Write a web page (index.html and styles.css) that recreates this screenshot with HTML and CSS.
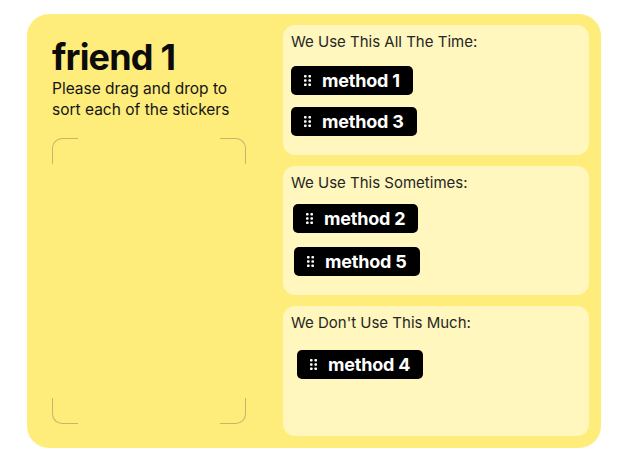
FILE: index.html
```html
<!DOCTYPE html>
<html lang="en">
<head>
  <meta charset="UTF-8">
  <meta name="viewport" content="width=device-width, initial-scale=1.0">
  <title>Sticker Sort</title>
  <link rel="stylesheet" href="styles.css">
</head>
<body>
  <!-- Sticker board -->
  <main class="board">
    <section class="intro">
      <h1 class="friend-name">friend 1</h1>
      <p class="hint">Please drag and drop to sort each of the stickers</p>

      <!-- Empty tray, only the corners are drawn -->
      <div class="tray">
        <div class="tray-row">
          <span class="corner corner-tl"></span>
          <span class="corner corner-tr"></span>
        </div>
        <div class="tray-row">
          <span class="corner corner-bl"></span>
          <span class="corner corner-br"></span>
        </div>
      </div>
    </section>

    <section class="buckets">
      <div class="bucket">
        <p class="bucket-title">We Use This All The Time:</p>
        <div class="sticker sticker-1">
          <svg class="grip" width="7" height="11" viewBox="0 0 7 11"><rect x="0" y="0" width="2.6" height="2.6" rx="0.8"/><rect x="4.4" y="0" width="2.6" height="2.6" rx="0.8"/><rect x="0" y="4.2" width="2.6" height="2.6" rx="0.8"/><rect x="4.4" y="4.2" width="2.6" height="2.6" rx="0.8"/><rect x="0" y="8.4" width="2.6" height="2.6" rx="0.8"/><rect x="4.4" y="8.4" width="2.6" height="2.6" rx="0.8"/></svg>
          <span>method 1</span>
        </div>
        <div class="sticker sticker-3">
          <svg class="grip" width="7" height="11" viewBox="0 0 7 11"><rect x="0" y="0" width="2.6" height="2.6" rx="0.8"/><rect x="4.4" y="0" width="2.6" height="2.6" rx="0.8"/><rect x="0" y="4.2" width="2.6" height="2.6" rx="0.8"/><rect x="4.4" y="4.2" width="2.6" height="2.6" rx="0.8"/><rect x="0" y="8.4" width="2.6" height="2.6" rx="0.8"/><rect x="4.4" y="8.4" width="2.6" height="2.6" rx="0.8"/></svg>
          <span>method 3</span>
        </div>
      </div>

      <div class="bucket">
        <p class="bucket-title">We Use This Sometimes:</p>
        <div class="sticker sticker-2">
          <svg class="grip" width="7" height="11" viewBox="0 0 7 11"><rect x="0" y="0" width="2.6" height="2.6" rx="0.8"/><rect x="4.4" y="0" width="2.6" height="2.6" rx="0.8"/><rect x="0" y="4.2" width="2.6" height="2.6" rx="0.8"/><rect x="4.4" y="4.2" width="2.6" height="2.6" rx="0.8"/><rect x="0" y="8.4" width="2.6" height="2.6" rx="0.8"/><rect x="4.4" y="8.4" width="2.6" height="2.6" rx="0.8"/></svg>
          <span>method 2</span>
        </div>
        <div class="sticker sticker-5">
          <svg class="grip" width="7" height="11" viewBox="0 0 7 11"><rect x="0" y="0" width="2.6" height="2.6" rx="0.8"/><rect x="4.4" y="0" width="2.6" height="2.6" rx="0.8"/><rect x="0" y="4.2" width="2.6" height="2.6" rx="0.8"/><rect x="4.4" y="4.2" width="2.6" height="2.6" rx="0.8"/><rect x="0" y="8.4" width="2.6" height="2.6" rx="0.8"/><rect x="4.4" y="8.4" width="2.6" height="2.6" rx="0.8"/></svg>
          <span>method 5</span>
        </div>
      </div>

      <div class="bucket">
        <p class="bucket-title">We Don't Use This Much:</p>
        <div class="sticker sticker-4">
          <svg class="grip" width="7" height="11" viewBox="0 0 7 11"><rect x="0" y="0" width="2.6" height="2.6" rx="0.8"/><rect x="4.4" y="0" width="2.6" height="2.6" rx="0.8"/><rect x="0" y="4.2" width="2.6" height="2.6" rx="0.8"/><rect x="4.4" y="4.2" width="2.6" height="2.6" rx="0.8"/><rect x="0" y="8.4" width="2.6" height="2.6" rx="0.8"/><rect x="4.4" y="8.4" width="2.6" height="2.6" rx="0.8"/></svg>
          <span>method 4</span>
        </div>
      </div>
    </section>
  </main>
</body>
</html>
```

FILE: styles.css
```css
body {
  font-family: 'Inter', 'Liberation Sans', sans-serif;
  margin: 0;
  padding: 0;
  background-color: #fff;
  color: #111;
}

/* Board */
.board {
  box-sizing: border-box;
  width: 574px;
  height: 434px;
  margin: 14px 0 0 27px;
  padding: 11px 12px 12px 25px;
  background-color: #feec7b;
  border-radius: 22px;
  display: grid;
  grid-template-columns: 194px 306px;
  column-gap: 37px;
}

/* Left side */
.intro {
  display: flex;
  flex-direction: column;
  padding-top: 12px;
}

.friend-name {
  margin: 0;
  font-size: 36px;
  line-height: 40px;
  font-weight: 700;
  letter-spacing: -0.8px;
  color: #0b0b0b;
}

.hint {
  margin: 2px 0 0;
  font-size: 15.5px;
  line-height: 20.5px;
  color: #151515;
}

.tray {
  flex: 1;
  margin: 18px 0 12px;
  display: flex;
  flex-direction: column;
  justify-content: space-between;
}

.tray-row {
  display: flex;
  justify-content: space-between;
}

.corner {
  width: 26px;
  height: 26px;
  box-sizing: border-box;
  border: 0 solid #c8b566;
}

.corner-tl {
  border-top-width: 1px;
  border-left-width: 1px;
  border-top-left-radius: 10px;
}

.corner-tr {
  border-top-width: 1px;
  border-right-width: 1px;
  border-top-right-radius: 10px;
}

.corner-bl {
  border-bottom-width: 1px;
  border-left-width: 1px;
  border-bottom-left-radius: 10px;
}

.corner-br {
  border-bottom-width: 1px;
  border-right-width: 1px;
  border-bottom-right-radius: 10px;
}

/* Right side */
.buckets {
  display: flex;
  flex-direction: column;
  gap: 11px;
}

.bucket {
  flex: 1;
  background-color: #fff7bd;
  border-radius: 12px;
  padding: 7px 8px;
  display: flex;
  flex-direction: column;
  align-items: flex-start;
}

.bucket-title {
  margin: 0;
  font-size: 15px;
  line-height: 20px;
  color: #262626;
}

/* Stickers */
.sticker {
  display: flex;
  align-items: center;
  gap: 11px;
  height: 29px;
  padding: 0 13px;
  background-color: #000;
  color: #fff;
  border-radius: 5px;
  font-size: 18px;
  font-weight: 700;
  letter-spacing: -0.2px;
}

.grip {
  fill: #fff;
  flex-shrink: 0;
}

.sticker-1 { margin: 14px 0 0 0; }
.sticker-3 { margin: 12px 0 0 0; }
.sticker-2 { margin: 11px 0 0 2px; }
.sticker-5 { margin: 14px 0 0 3px; }
.sticker-4 { margin: 17px 0 0 6px; }
```
